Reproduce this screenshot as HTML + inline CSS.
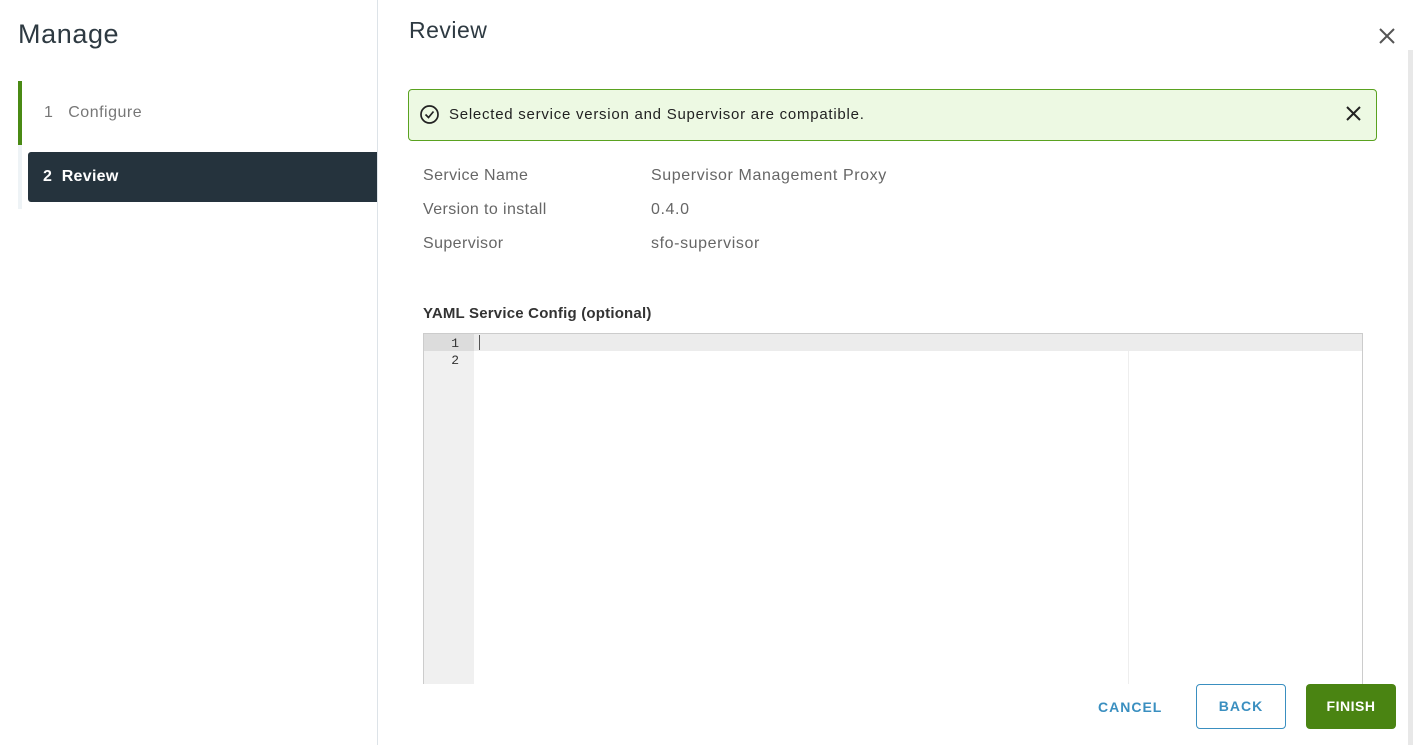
<!DOCTYPE html>
<html><head><style>
*{margin:0;padding:0;box-sizing:border-box}
body{width:1413px;height:745px;overflow:hidden;background:#fff;font-family:"Liberation Sans",sans-serif;position:relative;color:#333}
.a{position:absolute}
</style></head><body>
<div class="a" style="left:18px;top:19px;font-size:27px;color:#2e3a42;letter-spacing:.6px">Manage</div>
<div class="a" style="left:18px;top:81px;width:4px;height:64px;background:#4a8a14"></div>
<div class="a" style="left:18px;top:145px;width:4px;height:64px;background:#eef3f6"></div>
<div class="a" style="left:44px;top:104px;font-size:16px;color:#777;letter-spacing:.5px">1&nbsp;&nbsp;&nbsp;Configure</div>
<div class="a" style="left:28px;top:152px;width:349px;height:50px;background:#25333d;border-radius:3px 0 0 3px"></div>
<div class="a" style="left:43px;top:168px;font-size:16px;color:#fff;font-weight:bold;letter-spacing:.3px">2&nbsp;&nbsp;Review</div>
<div class="a" style="left:377px;top:0;width:1px;height:745px;background:#dde3e8"></div>
<div class="a" style="left:409px;top:17px;font-size:23px;color:#2e3a42;letter-spacing:.5px">Review</div>
<svg class="a" style="left:1378px;top:27px" width="18" height="18"><path d="M2 2L16 16M16 2L2 16" stroke="#555" stroke-width="2"/></svg>
<div class="a" style="left:1408px;top:50px;width:5px;height:695px;background:#e8e8e8"></div>
<div class="a" style="left:408px;top:89px;width:969px;height:52px;background:#edf9e3;border:1px solid #5aa220;border-radius:4px"></div>
<svg class="a" style="left:419px;top:104px" width="21" height="21"><circle cx="10.5" cy="10.5" r="8.5" fill="none" stroke="#222" stroke-width="1.7"/><path d="M6.5 10.5l3 3 5-6" fill="none" stroke="#222" stroke-width="1.7"/></svg>
<div class="a" style="left:449px;top:106px;font-size:15px;color:#222;letter-spacing:.75px">Selected service version and Supervisor are compatible.</div>
<svg class="a" style="left:1345px;top:105px" width="17" height="17"><path d="M2 2L15 15M15 2L2 15" stroke="#222" stroke-width="2"/></svg>
<div class="a" style="left:423px;top:159px;font-size:16px;color:#666;line-height:34px;letter-spacing:.4px">Service Name<br>Version to install<br>Supervisor</div>
<div class="a" style="left:651px;top:159px;font-size:16px;color:#666;line-height:34px;letter-spacing:.6px">Supervisor Management Proxy<br>0.4.0<br>sfo-supervisor</div>
<div class="a" style="left:423px;top:305px;font-size:15px;font-weight:bold;color:#333;letter-spacing:.2px">YAML Service Config (optional)</div>
<div class="a" style="left:423px;top:333px;width:940px;height:351px;border:1px solid #ccc;border-bottom:none;background:#fff"></div>
<div class="a" style="left:424px;top:334px;width:50px;height:350px;background:#f0f0f0"></div>
<div class="a" style="left:424px;top:334px;width:938px;height:17px;background:#ececec"></div>
<div class="a" style="left:424px;top:334px;width:50px;height:17px;background:#dcdcdc"></div>
<div class="a" style="left:1128px;top:351px;width:1px;height:333px;background:#eee"></div>
<div class="a" style="left:479px;top:335px;width:1px;height:15px;background:#555"></div>
<div class="a" style="left:424px;top:335px;width:35px;text-align:right;font-size:13px;line-height:17px;color:#333;font-family:'Liberation Mono',monospace">1<br>2</div>
<div class="a" style="left:1098px;top:699px;font-size:14px;font-weight:bold;color:#3a8fc0;letter-spacing:1px">CANCEL</div>
<div class="a" style="left:1196px;top:684px;width:90px;height:45px;border:1px solid #3a8fc0;border-radius:4px;font-size:14px;font-weight:bold;color:#3a8fc0;letter-spacing:1px;text-align:center;line-height:43px">BACK</div>
<div class="a" style="left:1306px;top:684px;width:90px;height:45px;background:#4a8412;border-radius:4px;font-size:14px;font-weight:bold;color:#fff;letter-spacing:.5px;text-align:center;line-height:45px">FINISH</div>
</body></html>
